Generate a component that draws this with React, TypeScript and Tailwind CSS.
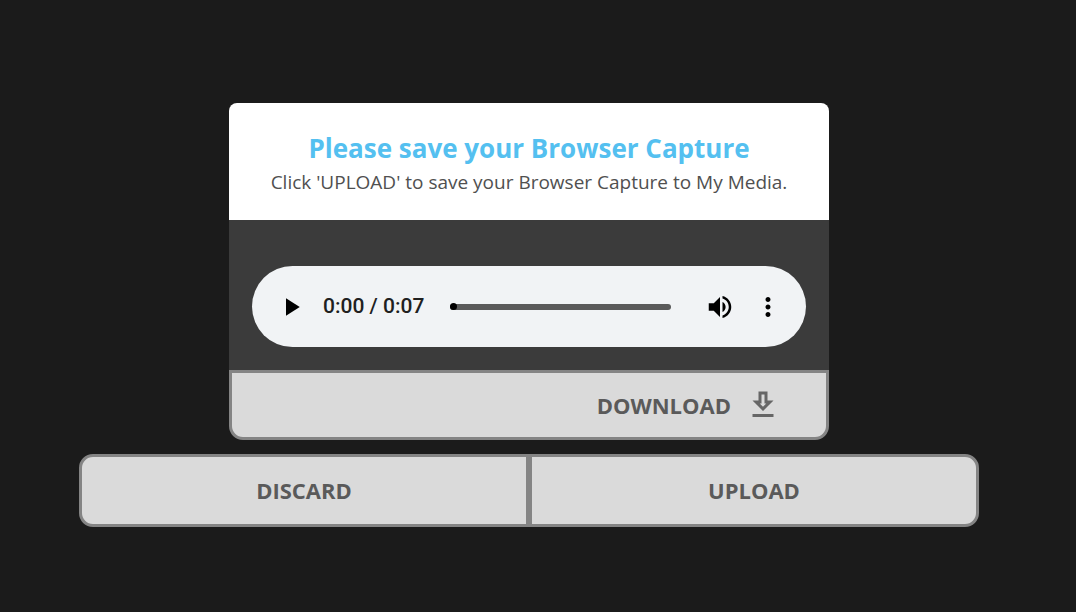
import React, { useState } from 'react';

const DURATION = 7;

function formatTime(seconds: number) {
  const rest = Math.floor(seconds % 60);
  return `${Math.floor(seconds / 60)}:${rest < 10 ? '0' : ''}${rest}`;
}

interface IconProps {
  path: string;
  className?: string;
}

function Icon({ path, className }: IconProps) {
  return (
    <svg viewBox="0 0 24 24" fill="currentColor" aria-hidden="true" className={className}>
      <path d={path} />
    </svg>
  );
}

const icons = {
  play: 'M8 5v14l11-7z',
  volume:
    'M3 9v6h4l5 5V4L7 9H3zm13.5 3c0-1.77-1.02-3.29-2.5-4.03v8.05c1.48-.73 2.5-2.25 2.5-4.02zM14 3.23v2.06c2.89.86 5 3.54 5 6.71s-2.11 5.85-5 6.71v2.06c4.01-.91 7-4.49 7-8.77s-2.99-7.86-7-8.77z',
  more: 'M12 8c1.1 0 2-.9 2-2s-.9-2-2-2-2 .9-2 2 .9 2 2 2zm0 2c-1.1 0-2 .9-2 2s.9 2 2 2 2-.9 2-2-.9-2-2-2zm0 6c-1.1 0-2 .9-2 2s.9 2 2 2 2-.9 2-2-.9-2-2-2z',
  download:
    'M19 9h-4V3H9v6H5l7 7 7-7zm-8 2V5h2v6h1.17L12 13.17 9.83 11H11zm-6 7h14v2H5z',
};

function AudioPlayer() {
  const [time, setTime] = useState(0);

  return (
    <div className="flex h-[81px] items-center rounded-full bg-[#f1f3f5] pl-6 pr-[23px] text-black">
      <button type="button" aria-label="Play" className="shrink-0">
        <Icon path={icons.play} className="size-[30px]" />
      </button>
      <span className="ml-[17px] shrink-0 whitespace-nowrap font-['Roboto',sans-serif] text-[21px] font-medium leading-[33px] text-[#202020]">
        {formatTime(time)} / {formatTime(DURATION)}
      </span>
      <input
        type="range"
        aria-label="Seek"
        min={0}
        max={DURATION}
        value={time}
        onChange={(e) => setTime(Number(e.target.value))}
        className="ml-[26px] h-[6px] min-w-0 flex-1 cursor-pointer appearance-none rounded-full bg-[#5a5a5a] [&::-webkit-slider-thumb]:size-[7px] [&::-webkit-slider-thumb]:appearance-none [&::-webkit-slider-thumb]:rounded-full [&::-webkit-slider-thumb]:bg-black"
      />
      <button type="button" aria-label="Mute" className="ml-[34px] shrink-0">
        <Icon path={icons.volume} className="size-[30px]" />
      </button>
      <button type="button" aria-label="More options" className="ml-[18px] shrink-0">
        <Icon path={icons.more} className="size-[30px]" />
      </button>
    </div>
  );
}

export default function App() {
  return (
    <main className="flex min-h-screen flex-col items-center bg-[#1b1b1b] pb-6 pl-4 pr-[34px] pt-[103px] font-['Open_Sans','Noto_Sans',sans-serif]">
      <section className="w-full max-w-[600px]">
        <header className="rounded-t-lg bg-white px-4 pb-5 pt-7 text-center">
          <h1 className="text-[26px] font-bold leading-[34px] text-[#54c0f0]">
            Please save your Browser Capture
          </h1>
          <p className="text-[19px] leading-[35px] text-[#505050]">
            Click 'UPLOAD' to save your Browser Capture to My Media.
          </p>
        </header>
        <div className="bg-[#3b3b3b] px-[23px] pb-[23px] pt-[46px]">
          <AudioPlayer />
        </div>
        <button
          type="button"
          className="flex h-[70px] w-full items-center justify-end gap-[14px] rounded-b-[14px] border-[3px] border-[#848484] bg-[#dadada] pr-[45px] text-[22px] font-bold text-[#5a5a5a]"
        >
          DOWNLOAD
          <Icon path={icons.download} className="size-9 text-[#666666]" />
        </button>
      </section>
      <div className="mt-[14px] flex h-[73px] w-full max-w-[900px] text-[22px] font-bold text-[#5a5a5a]">
        <button
          type="button"
          className="flex-1 rounded-l-[14px] border-[3px] border-[#848484] bg-[#dadada]"
        >
          DISCARD
        </button>
        <button
          type="button"
          className="flex-1 rounded-r-[14px] border-[3px] border-[#848484] bg-[#dadada]"
        >
          UPLOAD
        </button>
      </div>
    </main>
  );
}
